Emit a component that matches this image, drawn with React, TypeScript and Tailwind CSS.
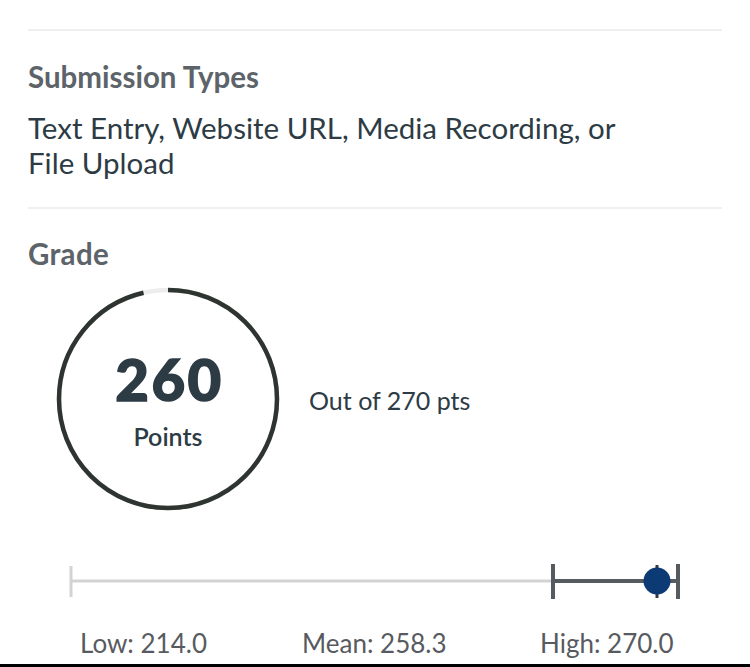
import React from 'react';

const R = 109;
const C = 2 * Math.PI * R;

function ScoreRing({ score, total }: { score: number; total: number }) {
  const done = (score / total) * C;
  return (
    <div className="relative w-[226px] h-[226px] shrink-0">
      <svg width="226" height="226" viewBox="0 0 226 226" className="absolute inset-0">
        <circle cx="113" cy="113" r={R} fill="none" stroke="#ededed" strokeWidth="4.5" />
        <circle
          cx="113"
          cy="113"
          r={R}
          fill="none"
          stroke="#2e3531"
          strokeWidth="4.5"
          strokeDasharray={`${done} ${C}`}
          transform="rotate(-90 113 113)"
        />
      </svg>
      <div className="absolute inset-0 flex flex-col items-center justify-center">
        <span className="text-[58px] leading-none font-black text-[#2d3b45] [-webkit-text-stroke:1.5px_#2d3b45] tracking-[2.5px] ml-[3px] mt-[8px]">
          {score}
        </span>
        <span className="text-[25px] font-semibold text-[#2d3b45] mt-[10px]">Points</span>
      </div>
    </div>
  );
}

function RangeChart() {
  return (
    <svg width="694" height="50" viewBox="0 0 694 50" className="block">
      <line x1="43" y1="25" x2="525" y2="25" stroke="#d3d3d3" strokeWidth="3" />
      <line x1="43" y1="10" x2="43" y2="41" stroke="#d3d3d3" strokeWidth="3" />
      <line x1="525" y1="25" x2="650" y2="25" stroke="#555b5f" strokeWidth="4" />
      <line x1="525" y1="8" x2="525" y2="43" stroke="#555b5f" strokeWidth="4" />
      <line x1="650" y1="8" x2="650" y2="43" stroke="#555b5f" strokeWidth="4" />
      <line x1="629" y1="9" x2="629" y2="42" stroke="#333a3e" strokeWidth="3" />
      <circle cx="629" cy="25" r="13.5" fill="#0b3a75" />
    </svg>
  );
}

export default function App() {
  return (
    <div
      className="w-[750px] h-[667px] bg-white overflow-hidden flex flex-col"
      style={{ fontFamily: 'Lato, "Open Sans", sans-serif' }}
    >
      <div className="h-[29px] shrink-0" />
      <div className="mx-[28px] border-t-2 border-[#efefef]" />

      <div className="px-[28px] pt-[29px] pb-[27px]">
        <h3 className="text-[29.5px] leading-[34px] font-bold text-[#5c6369]">Submission Types</h3>
        <p className="mt-[16px] text-[29.5px] leading-[35px] text-[#2d3b45] w-[620px]">
          Text Entry, Website URL, Media Recording, or File Upload
        </p>
      </div>
      <div className="mx-[28px] border-t-2 border-[#efefef]" />

      <div className="px-[28px] pt-[28px]">
        <h3 className="text-[29.5px] leading-[34px] tracking-[0.3px] font-bold text-[#5c6369]">Grade</h3>
        <div className="flex items-center mt-[15px] ml-[27px]">
          <ScoreRing score={260} total={270} />
          <span className="ml-[28px] text-[25px] text-[#2d3b45] mt-[4px]">Out of 270 pts</span>
        </div>
      </div>

      <div className="mt-[44px] pl-[28px]">
        <RangeChart />
      </div>
      <div className="flex mt-[22px] text-[26px] leading-[30px] text-[#575b5f]">
        <span className="ml-[80px] w-[222px]">Low: 214.0</span>
        <span className="w-[238px]">Mean: 258.3</span>
        <span>High: 270.0</span>
      </div>
      <div className="mt-auto h-[3px] bg-black shrink-0" />
    </div>
  );
}
